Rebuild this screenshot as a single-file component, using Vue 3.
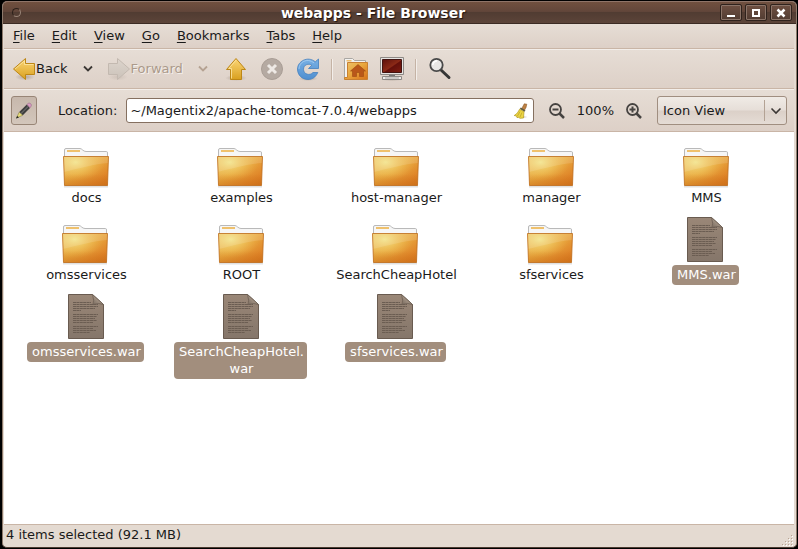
<script setup>
import { ref } from 'vue'

const menus = ['File', 'Edit', 'View', 'Go', 'Bookmarks', 'Tabs', 'Help']
const location = ref('~/Magentix2/apache-tomcat-7.0.4/webapps')
const view = ref('Icon View')

// A name is split where it may break onto a second line.
const items = [
  { name: ['docs'], type: 'folder' },
  { name: ['examples'], type: 'folder' },
  { name: ['host-manager'], type: 'folder' },
  { name: ['manager'], type: 'folder' },
  { name: ['MMS'], type: 'folder' },
  { name: ['omsservices'], type: 'folder' },
  { name: ['ROOT'], type: 'folder' },
  { name: ['SearchCheapHotel'], type: 'folder' },
  { name: ['sfservices'], type: 'folder' },
  { name: ['MMS.war'], type: 'file' },
  { name: ['omsservices.war'], type: 'file' },
  { name: ['SearchCheapHotel.', 'war'], type: 'file' },
  { name: ['sfservices.war'], type: 'file' },
]
</script>

<template>
  <div class="desktop">
    <svg class="defs" width="0" height="0" aria-hidden="true">
      <defs>
        <linearGradient id="gold" x1="0" y1="0" x2="0" y2="1">
          <stop offset="0" stop-color="#fbd676" />
          <stop offset="1" stop-color="#d9a01f" />
        </linearGradient>
        <linearGradient id="pale" x1="0" y1="0" x2="0" y2="1">
          <stop offset="0" stop-color="#ddd5cd" />
          <stop offset="1" stop-color="#cbc2b9" />
        </linearGradient>
        <radialGradient id="shade">
          <stop offset="0" stop-color="#7d6e62" stop-opacity=".45" />
          <stop offset="1" stop-color="#7d6e62" stop-opacity="0" />
        </radialGradient>
        <linearGradient id="folderBase" x1="0" y1="0" x2="1" y2="1">
          <stop offset="0" stop-color="#edc36c" />
          <stop offset=".45" stop-color="#e9a940" />
          <stop offset=".8" stop-color="#df8428" />
          <stop offset="1" stop-color="#d3741e" />
        </linearGradient>
        <radialGradient id="folderGlow" cx=".27" cy=".2" r=".65">
          <stop offset="0" stop-color="#f4e88e" stop-opacity=".9" />
          <stop offset="1" stop-color="#f0c050" stop-opacity="0" />
        </radialGradient>
        <linearGradient id="folderFoot" x1="0" y1="0" x2="0" y2="1">
          <stop offset=".6" stop-color="#c66a14" stop-opacity="0" />
          <stop offset="1" stop-color="#c66a14" stop-opacity=".45" />
        </linearGradient>
        <linearGradient id="page" x1="0" y1="0" x2="0" y2="1">
          <stop offset="0" stop-color="#9a8777" />
          <stop offset="1" stop-color="#85766a" />
        </linearGradient>
        <linearGradient id="fold" x1="0" y1="1" x2="1" y2="0">
          <stop offset="0" stop-color="#76685c" />
          <stop offset=".5" stop-color="#a39384" />
          <stop offset="1" stop-color="#8a7a6c" />
        </linearGradient>
        <linearGradient id="screen" x1="0" y1="0" x2="1" y2="1">
          <stop offset="0" stop-color="#5c0f0b" />
          <stop offset=".5" stop-color="#8b2a17" />
          <stop offset=".55" stop-color="#65100b" />
          <stop offset="1" stop-color="#7e1d10" />
        </linearGradient>
        <linearGradient id="blue" x1="0" y1="0" x2="0" y2="1">
          <stop offset="0" stop-color="#79b0e4" />
          <stop offset="1" stop-color="#4f8fd0" />
        </linearGradient>
      </defs>
    </svg>

    <main class="window">
      <header class="titlebar">
        <button class="sysmenu" aria-label="Window menu"></button>
        <h1>webapps - File Browser</h1>
        <div class="controls">
          <button aria-label="Minimize">
            <svg width="12" height="12"><path d="M2 8h8v2h-8z" fill="#fff" /></svg>
          </button>
          <button aria-label="Maximize">
            <svg width="12" height="12"><path d="M2 2h8v8h-8zM4 4v4h4v-4z" fill="#fff" fill-rule="evenodd" /></svg>
          </button>
          <button aria-label="Close">
            <svg width="12" height="12"><path d="M2.5 2.5l7 7M9.5 2.5l-7 7" stroke="#fff" stroke-width="2.5" /></svg>
          </button>
        </div>
      </header>

      <nav class="menubar" aria-label="Menu">
        <button v-for="m in menus" :key="m"><u>{{ m[0] }}</u>{{ m.slice(1) }}</button>
      </nav>

      <div class="toolbar">
        <button class="tool nav">
          <svg width="24" height="24" viewBox="0 0 24 24">
            <ellipse cx="13" cy="20" rx="10" ry="3.5" fill="url(#shade)" />
            <path d="M1.500 12L13.500 1.500V6.500H22.500V17.500H13.500V22.500Z" fill="url(#gold)" stroke="#bd8717" />
            <path d="M3 12L12.500 3.800V7.500H21.500" fill="none" stroke="#fde7a8" stroke-opacity=".8" />
          </svg>
          <span>Back</span>
        </button>
        <button class="tool drop" aria-label="Back history">
          <svg width="12" height="8"><path d="M2 1.500L6 5.500L10 1.500" fill="none" stroke="#3c3835" stroke-width="1.8" /></svg>
        </button>
        <button class="tool nav forward" disabled>
          <svg width="24" height="24" viewBox="0 0 24 24">
            <ellipse cx="11" cy="20" rx="10" ry="3.5" fill="url(#shade)" opacity=".4" />
            <path d="M22.500 12L10.500 1.500V6.500H1.500V17.500H10.500V22.500Z" fill="url(#pale)" stroke="#c3b9b0" />
          </svg>
          <span>Forward</span>
        </button>
        <button class="tool drop" aria-label="Forward history" disabled>
          <svg width="12" height="8"><path d="M2 1.500L6 5.500L10 1.500" fill="none" stroke="#b5a292" stroke-width="1.8" /></svg>
        </button>
        <button class="tool icon" aria-label="Up">
          <svg width="24" height="24" viewBox="0 0 24 24">
            <ellipse cx="12" cy="21" rx="11" ry="3" fill="url(#shade)" />
            <path d="M12 1.500L21.500 12.500H17.500V22.500H6.500V12.500H2.500Z" fill="url(#gold)" stroke="#bd8717" />
            <path d="M12 3.200L4.800 11.500H7.500V21.500" fill="none" stroke="#fde7a8" stroke-opacity=".8" />
          </svg>
        </button>
        <button class="tool icon" aria-label="Stop" disabled>
          <svg width="24" height="24" viewBox="0 0 24 24">
            <circle cx="12" cy="12" r="10.5" fill="#b5aaa2" stroke="#a89d95" />
            <path d="M8 8l8 8M16 8l-8 8" stroke="#eee9e5" stroke-width="3" />
          </svg>
        </button>
        <button class="tool icon" aria-label="Reload">
          <svg width="24" height="24" viewBox="0 0 24 24">
            <ellipse cx="12" cy="21.5" rx="10" ry="2.5" fill="url(#shade)" />
            <path d="M22.500 2V11.500H12.500L15.800 8.300C13 6 7.500 7.500 7.500 12.300C7.500 17.500 14 19 17 15.500H21.800C19.500 20.500 16 22.500 12 22.500C6 22.500 1.500 18 1.500 12C1.500 4.500 11.500 -1.500 19.300 4.800Z" fill="url(#blue)" stroke="#4480bf" stroke-width=".8" />
            <path d="M3 12C3 5 11 .5 18 5.800" fill="none" stroke="#a9cff2" stroke-opacity=".8" />
          </svg>
        </button>
        <span class="sep"></span>
        <button class="tool icon" aria-label="Home">
          <svg width="24" height="24" viewBox="0 0 24 24">
            <path d="M.5 22V1.500H8.500L10.500 3.500H21.500V8H23V22Z" fill="#f3f2f0" stroke="#aaa7a3" />
            <path d="M2.500 3h5v1.500h-5z" fill="#eebd6d" />
            <path d="M3.500 5.500H23.500V22.500H.5V20.500H3.500Z" fill="url(#folderBase)" stroke="#c98032" />
            <path d="M14 7.500L21.500 14H19.500V19.500H15.500V15.500H12.500V19.500H8.500V14H6.500Z" fill="#b9571a" stroke="#9f4913" stroke-width=".6" />
          </svg>
        </button>
        <button class="tool icon" aria-label="Computer">
          <svg width="24" height="24" viewBox="0 0 24 24">
            <ellipse cx="12" cy="22.5" rx="12" ry="1.5" fill="url(#shade)" />
            <path d="M.5.5H23.500V17.500H.5Z" fill="#e5e4e2" stroke="#8d8985" />
            <path d="M2.500 2.500H21.500V15.500H2.500Z" fill="url(#screen)" stroke="#421411" />
            <path d="M9 18h6v1.500h-6z" fill="#777" />
            <path d="M2.500 19.500H21.500V22.500H2.500Z" fill="#eeedeb" stroke="#8d8985" />
            <path d="M5 21h14" stroke="#a7a4a1" />
          </svg>
        </button>
        <span class="sep"></span>
        <button class="tool icon" aria-label="Search">
          <svg width="24" height="24" viewBox="0 0 24 24">
            <path d="M12.500 12.500L21 20.500" stroke="#363636" stroke-width="3" stroke-linecap="round" />
            <circle cx="8.500" cy="8" r="6.200" fill="#e9e7e5" stroke="#494949" stroke-width="1.8" />
            <path d="M4.800 8A4 4 0 0 1 9 4" stroke="#fff" stroke-width="1.5" fill="none" />
          </svg>
        </button>
      </div>

      <div class="locationbar">
        <button class="edit" aria-label="Toggle text location">
          <svg width="18" height="18" viewBox="0 0 18 18">
            <path d="M4.200 10L11.800 2.600L15 6L7.800 13.200Z" fill="#3f3f3f" />
            <path d="M6 11.500L13.300 4.300" stroke="#7b7b7b" />
            <path d="M12 2.500L13.200 1.400C15 .4 17.200 2.500 16 4.300L15 5.700Z" fill="#d79bc0" stroke="#8f5880" stroke-width=".5" />
            <path d="M1.500 16L4.200 10.200L7.600 13.300Z" fill="#e6db78" stroke="#77702f" stroke-width=".5" />
            <path d="M1 16.500L2.200 14L4 15.500Z" fill="#222" />
          </svg>
        </button>
        <label for="loc">Location:</label>
        <div class="entry">
          <input id="loc" v-model="location" type="text" spellcheck="false" />
          <button aria-label="Clear">
            <svg width="16" height="16" viewBox="0 0 16 16">
              <ellipse cx="9" cy="14" rx="6" ry="1.5" fill="url(#shade)" />
              <path d="M8.500 6L11.300 .8L13.800 1.200L13 4.500L11 8Z" fill="#bd8145" stroke="#8f5a29" stroke-width=".6" />
              <path d="M7.300 5.200L12 8" stroke="#5d5b45" stroke-width="1.8" />
              <path d="M6.500 6.300L11 8.700L10.500 15L7 15.300L5.500 14.300L4 14.600L3.500 13L1.200 12.500C4 11 5.500 8.500 6.500 6.300Z" fill="#ecd544" stroke="#b1981f" stroke-width=".7" />
              <path d="M7 8.500L4.500 13M9 9.500L7 14" stroke="#b79d25" stroke-width=".7" />
            </svg>
          </button>
        </div>
        <button class="zoom" aria-label="Zoom out">
          <svg width="16" height="16" viewBox="0 0 16 16" fill="none" stroke="#464341">
            <circle cx="6.500" cy="6.500" r="5.500" stroke-width="1.8" />
            <path d="M3.500 6.500h6" stroke-width="2" />
            <path d="M10.500 10.500L15 15" stroke-width="2.5" />
          </svg>
        </button>
        <span class="percent">100%</span>
        <button class="zoom" aria-label="Zoom in">
          <svg width="16" height="16" viewBox="0 0 16 16" fill="none" stroke="#464341">
            <circle cx="6.500" cy="6.500" r="5.500" stroke-width="1.8" />
            <path d="M3.500 6.500h6M6.500 3.500v6" stroke-width="2" />
            <path d="M10.500 10.500L15 15" stroke-width="2.5" />
          </svg>
        </button>
        <div class="combo">
          <select v-model="view" aria-label="View as">
            <option>Icon View</option>
            <option>List View</option>
            <option>Compact View</option>
          </select>
          <span class="arrow">
            <svg width="12" height="8"><path d="M1.500 1.500L6 6L10.500 1.500" fill="none" stroke="#3c3835" stroke-width="1.6" /></svg>
          </span>
        </div>
      </div>

      <ul class="files">
        <li v-for="it in items" :key="it.name.join('')">
          <button class="item" :class="it.type">
            <svg v-if="it.type === 'folder'" width="48" height="48" viewBox="0 0 48 48">
              <path d="M2 46.500H46" stroke="#000" stroke-opacity=".12" stroke-width="2" />
              <path d="M2.500 20V10Q2.500 8.500 4 8.500H18C20 8.500 21 11.500 24 11.500H44.500Q45.500 11.500 45.500 13V20Z" fill="#f6f6f6" stroke="#b9b9b9" />
              <path d="M5 10h13v2h-13z" fill="#efc16d" />
              <path d="M1.500 16.500H46.500L45.500 45.500H2.500Z" fill="url(#folderBase)" />
              <path d="M1.500 16.500H46.500L45.500 45.500H2.500Z" fill="url(#folderGlow)" />
              <path d="M1.500 16.500H46.500L45.500 45.500H2.500Z" fill="url(#folderFoot)" />
              <path d="M2 17H46V23C32 24 19 28 2 32Z" fill="#fff" fill-opacity=".13" />
              <path d="M1.500 16.500H46.500L45.500 45.500H2.500Z" fill="none" stroke="#bd6b1c" stroke-opacity=".8" />
            </svg>
            <svg v-else width="48" height="48" viewBox="0 1 48 48">
              <path d="M6.500 1.500H30.500L41.500 11.500V45.500H6.500Z" fill="url(#page)" stroke="#695b50" />
              <path d="M30.500 1.500Q32.500 8 31 11.500Q37 9.500 41.500 11.500Z" fill="url(#fold)" stroke="#6d5f54" stroke-width=".8" />
              <path
                d="M11 9.500h18M11 11.500h25M11 13.500h25M11 15.500h22M11 17.500h8M11 21.500h25M11 23.500h24M11 25.500h22M11 27.500h24M11 29.500h20M11 33.500h25M11 35.500h20M11 37.500h23M11 39.500h17"
                stroke="#6b5d52"
                stroke-dasharray="3 .4"
              />
            </svg>
            <span class="label"><template v-for="(part, i) in it.name" :key="i"><wbr v-if="i" />{{ part }}</template></span>
          </button>
        </li>
      </ul>

      <footer class="status">
        <span>4 items selected (92.1 MB)</span>
        <svg width="12" height="12" viewBox="0 0 12 12" aria-hidden="true">
          <path d="M9 0h1v1h-1zM6 3h1v1h-1zM9 3h1v1h-1zM3 6h1v1h-1zM6 6h1v1h-1zM9 6h1v1h-1zM0 9h1v1h-1zM3 9h1v1h-1zM6 9h1v1h-1zM9 9h1v1h-1z" fill="#b9a595" />
          <path d="M10 1h1v1h-1zM7 4h1v1h-1zM10 4h1v1h-1zM4 7h1v1h-1zM7 7h1v1h-1zM10 7h1v1h-1zM1 10h1v1h-1zM4 10h1v1h-1zM7 10h1v1h-1zM10 10h1v1h-1z" fill="#fff" />
        </svg>
      </footer>
    </main>
  </div>
</template>

<style>
body {
  margin: 0;
  background: #000;
}
</style>

<style scoped>
* {
  box-sizing: border-box;
}
.desktop {
  min-height: 100vh;
  display: flex;
  padding: 1px 1px 1px 2px;
  background: #000;
  color: #1a1a1a;
  font: 13px/17px "DejaVu Sans", sans-serif;
}
.defs {
  position: absolute;
}
button,
input,
select {
  margin: 0;
  padding: 0;
  border: 0;
  background: none;
  font: inherit;
  color: inherit;
}
svg {
  display: block;
  flex: none;
}
.window {
  flex: 1;
  min-width: 0;
  display: flex;
  flex-direction: column;
  border: 1px solid #8d7a6c;
  border-top-color: #8f7468;
  border-bottom-color: #4d3b31;
  border-radius: 5px;
  overflow: hidden;
  background: #e4dad1;
}
.titlebar {
  height: 22px;
  display: flex;
  align-items: center;
  padding: 0 4px 0 9px;
  background: linear-gradient(#70503f, #62463a 45%, #513c32 50%, #5c4439);
  border-bottom: 1px solid #3b2b23;
}
.sysmenu {
  width: 9px;
  height: 9px;
  border-radius: 50%;
  border: 1px solid #2c201a;
  border-bottom-color: #9a8578;
  border-right-color: #9a8578;
}
.titlebar h1 {
  flex: 1;
  margin: 0;
  padding-left: 5px;
  text-align: center;
  font: bold 14px/20px "DejaVu Sans", sans-serif;
  color: #fff;
  text-shadow: 1px 1px 1px #1c1310;
}
.controls {
  display: flex;
  gap: 3px;
}
.controls button {
  width: 22px;
  height: 17px;
  display: flex;
  align-items: center;
  justify-content: center;
  border: 1px solid #2f221c;
  border-radius: 2px;
  box-shadow: inset 0 0 0 1px #8b7468;
  background: linear-gradient(#6f5042, #513c32);
}
.menubar,
.toolbar,
.locationbar {
  margin: 0 2px 0 1px;
  display: flex;
  border-bottom: 1px solid #c9b5a6;
  background: linear-gradient(#e6ddd5, #ddd0c7);
}
.menubar {
  height: 25px;
  gap: 17px;
  padding: 0 9px;
}
.menubar button {
  padding-bottom: 1px;
}
.menubar u {
  text-underline-offset: 2px;
  text-decoration-skip-ink: none;
}
.toolbar {
  height: 40px;
  align-items: center;
  padding: 0 8px;
  border-top: 1px solid #f3eeea;
}
.tool {
  display: flex;
  align-items: center;
}
.nav span {
  padding-bottom: 2px;
}
.drop {
  padding: 0 9px 0 14px;
}
.forward {
  margin-left: 4px;
  color: #ab9a8b;
  text-shadow: 1px 1px 0 #f5f0ec;
}
.icon {
  padding: 0 6px;
}
.sep {
  width: 2px;
  height: 21px;
  margin: 0 5px;
  border-left: 1px solid #c5b3a5;
  border-right: 1px solid #f3eeea;
}
.locationbar {
  height: 43px;
  align-items: center;
  padding: 0 7px;
  border-top: 1px solid #f3eeea;
}
.edit {
  width: 26px;
  height: 29px;
  display: flex;
  align-items: center;
  justify-content: center;
  border: 1px solid #988576;
  border-radius: 3px;
  background: linear-gradient(#c7b8ac, #d3c6bb);
}
.locationbar label {
  margin: 0 9px 0 21px;
}
.entry {
  flex: 1;
  min-width: 0;
  height: 25px;
  display: flex;
  align-items: center;
  padding: 0 4px 0 3px;
  border: 1px solid #857060;
  border-radius: 3px;
  background: #fff;
  margin-right: 15px;
}
.entry input {
  flex: 1;
  min-width: 0;
  outline: 0;
}
.percent {
  margin: 0 12px;
}
.combo {
  position: relative;
  width: 130px;
  height: 29px;
  margin-left: 15px;
  border: 1px solid #a08e80;
  border-radius: 3px;
  background: linear-gradient(#f0ebe6, #e6ded8 48%, #dbd0c8 52%, #e5dcd5);
}
.combo select {
  appearance: none;
  width: 100%;
  height: 100%;
  padding: 0 30px 0 5px;
}
.arrow {
  position: absolute;
  top: 3px;
  right: 0;
  bottom: 3px;
  width: 22px;
  display: flex;
  align-items: center;
  justify-content: center;
  border-left: 1px solid #b3a294;
  pointer-events: none;
}
.files {
  flex: 1;
  margin: 0 2px 0 1px;
  padding: 8px 0 8px 4px;
  list-style: none;
  display: grid;
  grid-template-columns: repeat(auto-fill, 155px);
  align-content: start;
  row-gap: 9px;
  background: #fff;
}
.files li {
  height: 68px;
  display: flex;
  justify-content: center;
}
.item {
  display: flex;
  flex-direction: column;
  align-items: center;
  align-self: start;
}
.label {
  max-width: 133px;
  padding: 1px 3px 2px 5px;
  border-radius: 4px;
}
.file .label {
  background: #a28e7d;
  color: #fff;
}
.status {
  height: 23px;
  margin: 0 2px 0 1px;
  display: flex;
  align-items: flex-end;
  justify-content: space-between;
  border-top: 1px solid #c9b5a6;
}
.status span {
  padding: 0 2px 4px;
}
</style>
